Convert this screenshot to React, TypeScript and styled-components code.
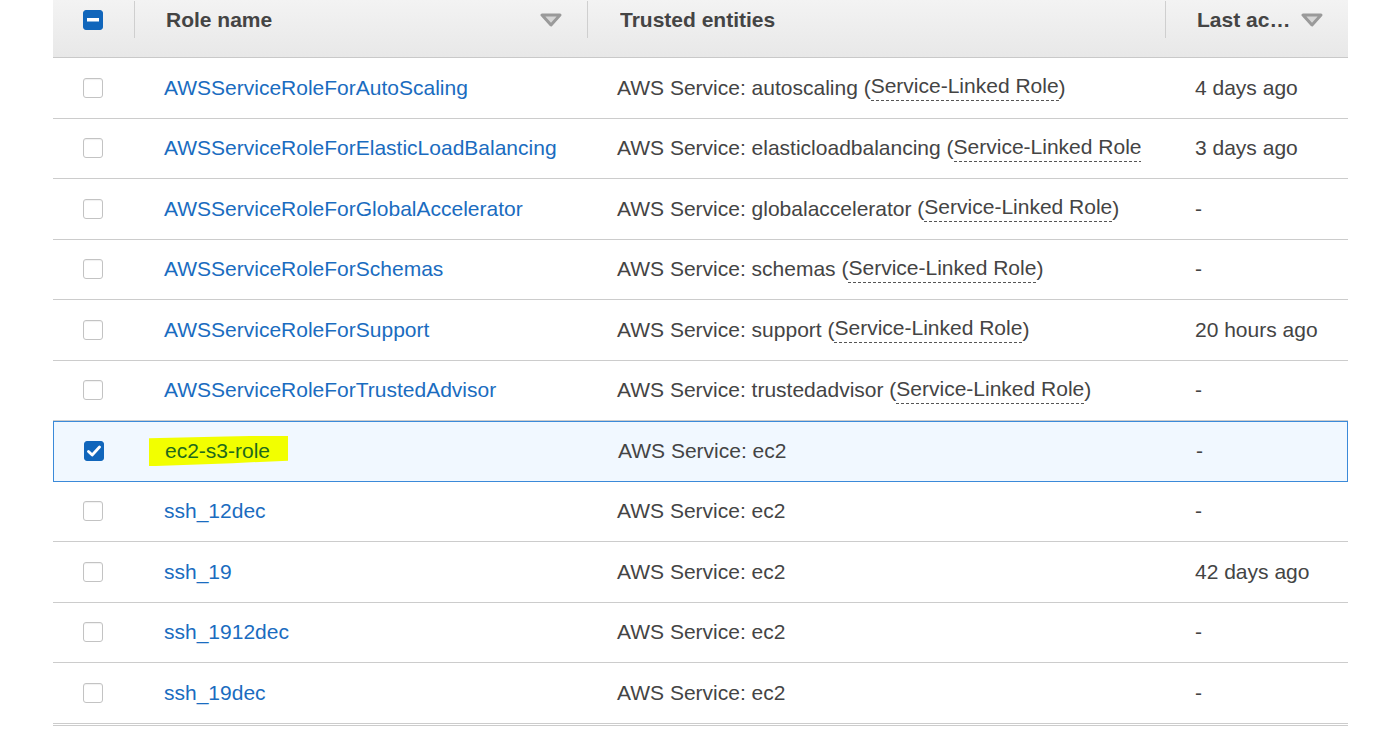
import React from "react";
import styled, { createGlobalStyle } from "styled-components";

const Global = createGlobalStyle`
  html, body { margin: 0; padding: 0; background: #fff; }
  body { font-family: "Liberation Sans", Arial, sans-serif; overflow: hidden; }
`;

const Page = styled.div`
  padding-left: 53px;
  width: 1295px;
`;

const Table = styled.div`
  width: 1295px;
  display: flex;
  flex-direction: column;
`;

const cols = "81px 453px 578px 183px";

const HeaderRow = styled.div`
  display: grid;
  grid-template-columns: ${cols};
  height: 58px;
  box-sizing: border-box;
  background: linear-gradient(#f3f3f3, #e8e8e8);
  border-bottom: 1px solid #c9c9c9;
  align-items: start;
`;

const SepWrap = styled.div`
  height: 38px;
  padding-top: 1px;
  box-sizing: border-box;
  display: flex;
  min-width: 0;
`;

const HeaderCell = styled.div<{ $sep?: boolean; $pl?: number; $pr?: number }>`
  flex: 1;
  height: 37px;
  display: flex;
  align-items: center;
  box-sizing: border-box;
  padding-left: ${(p) => p.$pl ?? 32}px;
  padding-right: ${(p) => p.$pr ?? 0}px;
  border-left: ${(p) => (p.$sep ? "1px solid #cfcfcf" : "none")};
  font-size: 21px;
  font-weight: bold;
  color: #444;
  min-width: 0;
  gap: 10px;
`;

const HeaderText = styled.span`
  flex: 1;
  min-width: 0;
  white-space: nowrap;
  overflow: hidden;
  text-overflow: ellipsis;
`;

const Row = styled.div<{ $selected?: boolean; $last?: boolean }>`
  display: grid;
  grid-template-columns: ${cols};
  height: ${(p) => (p.$last ? 62.5 : 60.5)}px;
  box-sizing: border-box;
  align-items: center;
  background: ${(p) => (p.$selected ? "#f1f8ff" : "#fff")};
  border: ${(p) => (p.$selected ? "1px solid #3b8ad9" : "none")};
  border-bottom: ${(p) =>
    p.$selected ? "1px solid #3b8ad9" : p.$last ? "3px double #cccccc" : "1px solid #cccccc"};
`;

const Cell = styled.div<{ $pl?: number; $mr?: number }>`
  padding-left: ${(p) => p.$pl ?? 30}px;
  margin-right: ${(p) => p.$mr ?? 0}px;
  font-size: 21px;
  color: #444;
  white-space: nowrap;
  overflow: hidden;
  min-width: 0;
  display: flex;
  align-items: center;
`;

const RoleLink = styled.a<{ $marked?: boolean }>`
  color: ${(p) => (p.$marked ? "#1f6a1c" : "#1a6cc0")};
  text-decoration: none;
  cursor: pointer;
  ${(p) =>
    p.$marked
      ? `
    background: #f2ff00;
    display: inline-block;
    line-height: 31px;
    height: 31px;
    margin-top: -1px;
    padding: 0 18px 0 16px;
    margin-left: -16px;
    clip-path: polygon(0 10%, 55% 4%, 100% 0, 100% 82%, 60% 90%, 0 100%);
  `
      : ""}
`;

const Dashed = styled.span`
  border-bottom: 1px dashed #555;
  padding-bottom: 2px;
`;

const Box = styled.span<{ $on?: boolean }>`
  width: 20px;
  height: 20px;
  box-sizing: border-box;
  border-radius: 3px;
  display: inline-flex;
  align-items: center;
  justify-content: center;
  background: ${(p) => (p.$on ? "#1166bb" : "#fff")};
  border: ${(p) => (p.$on ? "1px solid #1166bb" : "1px solid #c3c3c3")};
  box-shadow: ${(p) => (p.$on ? "none" : "inset 0 1px 1px rgba(0,0,0,0.06)")};
`;

const CheckCell = styled.div`
  padding-left: 30px;
  display: flex;
  align-items: center;
`;

const SortIcon = () => (
  <svg width="22" height="14" viewBox="0 0 22 14">
    <polygon points="2,2 20,2 11,12" fill="#d6d6d6" stroke="#9a9a9a" strokeWidth="3" strokeLinejoin="round" />
  </svg>
);

const Minus = () => (
  <svg width="12" height="4" viewBox="0 0 12 4">
    <rect x="0" y="0" width="12" height="3.5" fill="#fff" />
  </svg>
);

const Check = () => (
  <svg width="14" height="12" viewBox="0 0 14 12">
    <path d="M1.5 6.5 L5.2 10 L12.5 2" fill="none" stroke="#fff" strokeWidth="2.8" strokeLinecap="round" strokeLinejoin="round" />
  </svg>
);

type RowData = {
  name: string;
  service: string;
  linked: boolean;
  last: string;
  selected?: boolean;
};

const rows: RowData[] = [
  { name: "AWSServiceRoleForAutoScaling", service: "autoscaling", linked: true, last: "4 days ago" },
  { name: "AWSServiceRoleForElasticLoadBalancing", service: "elasticloadbalancing", linked: true, last: "3 days ago" },
  { name: "AWSServiceRoleForGlobalAccelerator", service: "globalaccelerator", linked: true, last: "-" },
  { name: "AWSServiceRoleForSchemas", service: "schemas", linked: true, last: "-" },
  { name: "AWSServiceRoleForSupport", service: "support", linked: true, last: "20 hours ago" },
  { name: "AWSServiceRoleForTrustedAdvisor", service: "trustedadvisor", linked: true, last: "-" },
  { name: "ec2-s3-role", service: "ec2", linked: false, last: "-", selected: true },
  { name: "ssh_12dec", service: "ec2", linked: false, last: "-" },
  { name: "ssh_19", service: "ec2", linked: false, last: "42 days ago" },
  { name: "ssh_1912dec", service: "ec2", linked: false, last: "-" },
  { name: "ssh_19dec", service: "ec2", linked: false, last: "-" },
];

export default function App() {
  return (
    <Page>
      <Global />
      <Table>
        <HeaderRow>
          <SepWrap>
            <HeaderCell $pl={30}>
              <Box $on>
                <Minus />
              </Box>
            </HeaderCell>
          </SepWrap>
          <SepWrap>
            <HeaderCell $sep $pl={31} $pr={25}>
              <HeaderText>Role name</HeaderText>
              <SortIcon />
            </HeaderCell>
          </SepWrap>
          <SepWrap>
            <HeaderCell $sep $pl={32}>
              <HeaderText>Trusted entities</HeaderText>
            </HeaderCell>
          </SepWrap>
          <SepWrap>
            <HeaderCell $sep $pl={31} $pr={25}>
              <HeaderText>Last accessed</HeaderText>
              <SortIcon />
            </HeaderCell>
          </SepWrap>
        </HeaderRow>
        {rows.map((r, i) => (
          <Row key={r.name} $selected={r.selected} $last={i === rows.length - 1}>
            <CheckCell>
              <Box $on={r.selected}>{r.selected && <Check />}</Box>
            </CheckCell>
            <Cell>
              <RoleLink $marked={r.selected}>{r.name}</RoleLink>
            </Cell>
            <Cell $mr={24}>
              AWS Service: {r.service}
              {r.linked && (
                <>
                  &nbsp;(<Dashed>Service-Linked Role</Dashed>)
                </>
              )}
            </Cell>
            <Cell>{r.last}</Cell>
          </Row>
        ))}
      </Table>
    </Page>
  );
}
